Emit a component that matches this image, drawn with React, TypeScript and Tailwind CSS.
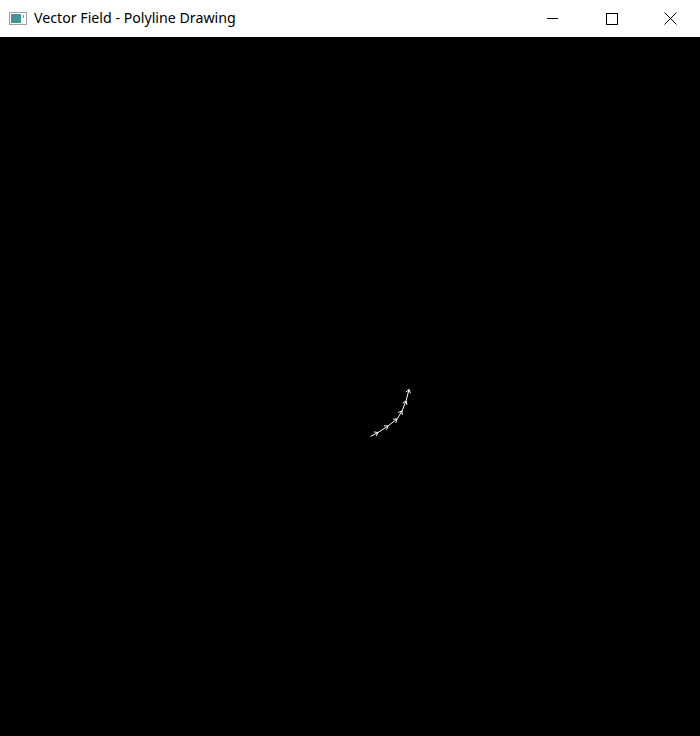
import React from "react";

// canvas coordinates (below the 37px title bar)
const pts: [number, number][] = [
  [370.5, 399.5],
  [378, 395.5],
  [388, 389],
  [397, 382],
  [402, 374],
  [406, 364],
  [409, 352.5],
];

function Arrow({ x, y, ang }: { x: number; y: number; ang: number }) {
  const a1 = ang + Math.PI * 0.8;
  const a2 = ang - Math.PI * 0.8;
  const l = 4;
  return (
    <polyline
      points={`${x + l * Math.cos(a1)},${y + l * Math.sin(a1)} ${x},${y} ${x + l * Math.cos(a2)},${y + l * Math.sin(a2)}`}
      fill="none"
      stroke="white"
      strokeWidth={1}
    />
  );
}

function Curve() {
  return (
    <svg width="700" height="699" className="block">
      <polyline
        points={pts.map((p) => p.join(",")).join(" ")}
        fill="none"
        stroke="white"
        strokeWidth={1}
      />
      {pts.slice(1).map((p, i) => {
        const q = pts[i];
        const ang = Math.atan2(p[1] - q[1], p[0] - q[0]);
        return <Arrow key={i} x={p[0]} y={p[1]} ang={ang} />;
      })}
    </svg>
  );
}

export default function App() {
  return (
    <div className="w-[700px] h-[736px] flex flex-col bg-white overflow-hidden">
      <div className="h-[37px] flex items-center bg-white shrink-0">
        <div className="ml-[9px] w-[18px] h-[13px] border border-[#a0a0a0] bg-white flex p-[1px]">
          <div className="w-[10px] h-full bg-gradient-to-br from-[#4a86b8] to-[#3fa06e]" />
          <div className="flex-1 flex justify-end pr-[1px] pt-[1px]">
            <div className="w-[1px] h-[3px] bg-[#8a8a8a]" />
          </div>
        </div>
        <span className="ml-[7px] text-[14.2px] text-black font-['Noto_Sans',sans-serif] leading-none">
          Vector Field - Polyline Drawing
        </span>
        <div className="ml-auto flex h-full">
          <div className="w-[59px] h-full flex items-center justify-center">
            <div className="w-[11px] h-[1px] bg-black" />
          </div>
          <div className="w-[59px] h-full flex items-center justify-center">
            <div className="w-[12px] h-[12px] border border-black" />
          </div>
          <div className="w-[59px] h-full flex items-center justify-center">
            <svg width="13" height="13" viewBox="0 0 13 13">
              <path d="M0.5 0.5 L12.5 12.5 M12.5 0.5 L0.5 12.5" stroke="black" strokeWidth="1" />
            </svg>
          </div>
        </div>
      </div>
      <div className="flex-1 bg-black">
        <Curve />
      </div>
    </div>
  );
}
